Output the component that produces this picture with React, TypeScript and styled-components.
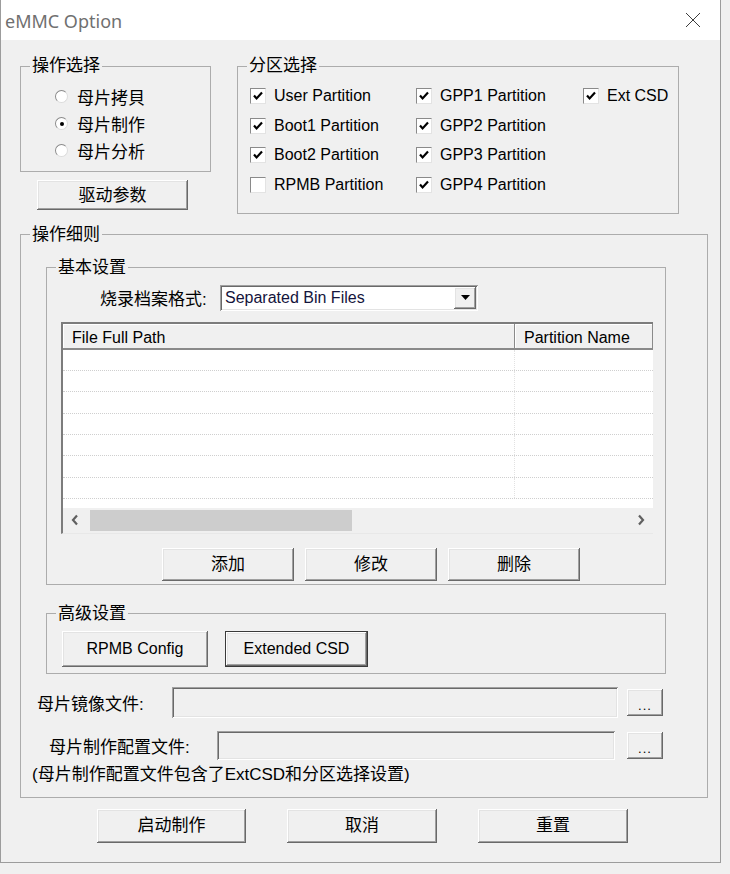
import styled, { createGlobalStyle, css } from 'styled-components'

const GlobalStyle = createGlobalStyle`
  html, body {
    margin: 0;
    padding: 0;
    background: #f0f0f0;
  }
  body {
    font-family: "Liberation Sans", "Noto Sans CJK SC", sans-serif;
    font-size: 16px;
    color: #000;
  }
  * { box-sizing: border-box; }
`

const raised = css`
  box-shadow: inset -1px -1px 0 #696969, inset 1px 1px 0 #ffffff,
    inset -2px -2px 0 #a0a0a0, inset 2px 2px 0 #e3e3e3;
`

const sunken = css`
  box-shadow: inset 1px 1px 0 #a0a0a0, inset -1px -1px 0 #ffffff,
    inset 2px 2px 0 #696969, inset -2px -2px 0 #e3e3e3;
`

const Window = styled.div`
  width: 721px;
  height: 863px;
  border: 1px solid #9c9c9c;
  border-top: none;
  background: #f0f0f0;
  display: flex;
  flex-direction: column;
`

const TitleBar = styled.div`
  height: 40px;
  flex: none;
  background: #fff;
  display: flex;
  align-items: center;
  justify-content: space-between;
  padding: 0 19px 0 4px;
`

const Title = styled.span`
  font-family: "Noto Sans", "Open Sans", sans-serif;
  font-size: 18px;
  color: #707070;
  line-height: 1;
  margin-top: 2px;
`

const Body = styled.div`
  flex: 1;
  padding: 17px 0 0 19px;
  display: flex;
  flex-direction: column;
`

const TopRow = styled.div`
  display: flex;
  align-items: flex-start;
  gap: 26px;
`

const LeftColumn = styled.div`
  width: 191px;
  display: flex;
  flex-direction: column;
  align-items: flex-start;
`

const Group = styled.fieldset<{ $w: number; $ml?: number; $mt?: number }>`
  margin: ${p => p.$mt ?? 0}px 0 0 ${p => p.$ml ?? 0}px;
  padding: 0;
  width: ${p => p.$w}px;
  min-width: 0;
  border: 1px solid #acacac;
  flex: none;
`

const Legend = styled.legend`
  margin-left: 9px;
  padding: 0 2px;
  font-size: 17px;
  line-height: 18px;
  height: 18px;
`

const RadioList = styled.div`
  padding: 8px 0 7px 34px;
`

const RadioRow = styled.label`
  display: flex;
  align-items: center;
  height: 27px;
  font-size: 17px;
`

const RadioDot = styled.span<{ $on?: boolean }>`
  width: 13px;
  height: 13px;
  border-radius: 50%;
  background: #fff;
  border: 1px solid;
  border-color: #8a8a8a #dcdcdc #dcdcdc #8a8a8a;
  margin-right: 9px;
  display: flex;
  align-items: center;
  justify-content: center;
  &::after {
    content: '';
    width: 4px;
    height: 4px;
    border-radius: 50%;
    background: ${p => (p.$on ? '#000' : 'transparent')};
  }
`

const Button = styled.button<{ $w: number; $h: number; $size?: number; $primary?: boolean }>`
  width: ${p => p.$w}px;
  height: ${p => p.$h}px;
  flex: none;
  padding: 0;
  background: #f0f0f0;
  border: ${p => (p.$primary ? '1px solid #3a3a3a' : 'none')};
  ${raised}
  font-family: inherit;
  font-size: ${p => p.$size ?? 17}px;
  line-height: 1;
  color: #000;
`

const DriverButton = styled(Button)`
  margin: 8px 0 0 17px;
`

const CheckGrid = styled.div`
  display: grid;
  grid-template-columns: 166px 167px 1fr;
  grid-auto-rows: 29.7px;
  padding: 6px 0 13px 12px;
`

const CheckItem = styled.label`
  display: flex;
  align-items: center;
  white-space: nowrap;
`

const CheckBox = styled.span`
  width: 16px;
  height: 16px;
  background: #fff;
  border: 1px solid;
  border-color: #8a8a8a #e3e3e3 #e3e3e3 #8a8a8a;
  margin-right: 8px;
  display: flex;
  align-items: center;
  justify-content: center;
`

const DetailsBody = styled.div`
  display: flex;
  flex-direction: column;
  align-items: flex-start;
  padding-bottom: 12px;
`

const FormatRow = styled.div`
  display: flex;
  align-items: center;
  margin: 8px 0 0 53px;
`

const FieldLabel = styled.span<{ $w: number }>`
  width: ${p => p.$w}px;
  font-size: 17px;
  white-space: nowrap;
  flex: none;
`

const Combo = styled.div`
  width: 258px;
  height: 26px;
  flex: none;
  margin-left: 3px;
  background: #fff;
  ${sunken}
  display: flex;
  align-items: stretch;
  padding: 2px;
`

const ComboText = styled.span`
  flex: 1;
  display: flex;
  align-items: center;
  padding-left: 3px;
  color: #14143c;
`

const ComboArrow = styled.span`
  width: 22px;
  background: #f0f0f0;
  ${raised}
  display: flex;
  align-items: center;
  justify-content: center;
`

const ListView = styled.div`
  width: 592px;
  height: 212px;
  margin: 11px 0 0 14px;
  background: #fff;
  border-top: 2px solid #7c7c7c;
  border-left: 2px solid #7c7c7c;
  border-bottom: 1px solid #e8e8e8;
  display: flex;
  flex-direction: column;
`

const ListHeader = styled.div`
  height: 26px;
  flex: none;
  display: grid;
  grid-template-columns: 452px 1fr;
`

const HeaderCell = styled.div`
  background: #f0f0f0;
  box-shadow: inset -1px -2px 0 #8a8a8a, inset 1px 1px 0 #ffffff;
  display: flex;
  align-items: center;
  padding: 3px 0 0 9px;
  white-space: nowrap;
  overflow: hidden;
`

const ListRows = styled.div`
  flex: 1;
  overflow: hidden;
`

const ListRow = styled.div`
  height: 21.3px;
  display: grid;
  grid-template-columns: 452px 1fr;
  border-bottom: 1px dotted #cfcfcf;
`

const ListCell = styled.div`
  border-right: 1px dotted #e2e2e2;
`

const HScroll = styled.div`
  height: 25px;
  flex: none;
  background: #f0f0f0;
  display: flex;
  align-items: center;
`

const ScrollArrow = styled.span`
  width: 24px;
  height: 100%;
  display: flex;
  align-items: center;
  justify-content: center;
  flex: none;
`

const ScrollTrack = styled.div`
  flex: 1;
  height: 100%;
  display: flex;
  align-items: center;
  padding-left: 3px;
`

const ScrollThumb = styled.div`
  width: 262px;
  height: 21px;
  background: #cdcdcd;
`

const ButtonRow = styled.div<{ $gap: number; $ml: number; $mt: number; $mb: number }>`
  display: flex;
  gap: ${p => p.$gap}px;
  margin: ${p => p.$mt}px 0 ${p => p.$mb}px ${p => p.$ml}px;
`

const FileRow = styled.div<{ $ml: number }>`
  display: flex;
  align-items: center;
  margin: 13px 0 0 ${p => p.$ml}px;
`

const FileInput = styled.div<{ $w: number; $h: number }>`
  width: ${p => p.$w}px;
  height: ${p => p.$h}px;
  background: #f0f0f0;
  ${sunken}
`

const BrowseButton = styled(Button)<{ $gap: number }>`
  margin-left: ${p => p.$gap}px;
  font-size: 13px;
  padding-top: 6px;
  letter-spacing: 1px;
`

const Note = styled.div`
  margin: 5px 0 0 11px;
  height: 20px;
  line-height: 20px;
  font-size: 17px;
  white-space: nowrap;
`

const Footer = styled.div`
  display: flex;
  gap: 41px;
  margin: 11px 0 0 77px;
`

const CloseIcon = () => (
  <svg width="16" height="16" viewBox="0 0 16 16">
    <path d="M1 1L15 15M15 1L1 15" stroke="#3c3c3c" strokeWidth="1" fill="none" />
  </svg>
)

const Check = () => (
  <svg width="12" height="12" viewBox="0 0 12 12">
    <polyline points="2,5.5 4.6,8.4 10,2.6" stroke="#000" strokeWidth="2.2" fill="none" />
  </svg>
)

const DownTriangle = () => (
  <svg width="9" height="5" viewBox="0 0 9 5">
    <polygon points="0,0 9,0 4.5,5" fill="#000" />
  </svg>
)

const Chevron = ({ dir }: { dir: 'left' | 'right' }) => (
  <svg width="8" height="12" viewBox="0 0 8 12">
    <polyline
      points={dir === 'left' ? '6,1.5 2,6 6,10.5' : '2,1.5 6,6 2,10.5'}
      stroke="#606060"
      strokeWidth="2.2"
      fill="none"
    />
  </svg>
)

const modes = ['母片拷貝', '母片制作', '母片分析']

const partitions: Array<{ label: string; on: boolean } | null> = [
  { label: 'User Partition', on: true },
  { label: 'GPP1 Partition', on: true },
  { label: 'Ext CSD', on: true },
  { label: 'Boot1 Partition', on: true },
  { label: 'GPP2 Partition', on: true },
  null,
  { label: 'Boot2 Partition', on: true },
  { label: 'GPP3 Partition', on: true },
  null,
  { label: 'RPMB Partition', on: false },
  { label: 'GPP4 Partition', on: true },
  null,
]

export default function App() {
  return (
    <>
      <GlobalStyle />
      <Window>
        <TitleBar>
          <Title>eMMC Option</Title>
          <CloseIcon />
        </TitleBar>

        <Body>
          <TopRow>
            <LeftColumn>
              <Group $w={191}>
                <Legend>操作选择</Legend>
                <RadioList>
                  {modes.map((m, i) => (
                    <RadioRow key={m}>
                      <RadioDot $on={i === 1} />
                      {m}
                    </RadioRow>
                  ))}
                </RadioList>
              </Group>
              <DriverButton $w={151} $h={30}>驱动参数</DriverButton>
            </LeftColumn>

            <Group $w={442}>
              <Legend>分区选择</Legend>
              <CheckGrid>
                {partitions.map((p, i) =>
                  p ? (
                    <CheckItem key={i}>
                      <CheckBox>{p.on && <Check />}</CheckBox>
                      {p.label}
                    </CheckItem>
                  ) : (
                    <span key={i} />
                  )
                )}
              </CheckGrid>
            </Group>
          </TopRow>

          <Group $w={688} $mt={12}>
            <Legend>操作细则</Legend>
            <DetailsBody>
              <Group $w={620} $ml={25} $mt={15}>
                <Legend>基本设置</Legend>
                <FormatRow>
                  <FieldLabel $w={117}>烧录档案格式:</FieldLabel>
                  <Combo>
                    <ComboText>Separated Bin Files</ComboText>
                    <ComboArrow>
                      <DownTriangle />
                    </ComboArrow>
                  </Combo>
                </FormatRow>

                <ListView>
                  <ListHeader>
                    <HeaderCell>File Full Path</HeaderCell>
                    <HeaderCell>Partition Name</HeaderCell>
                  </ListHeader>
                  <ListRows>
                    {Array.from({ length: 7 }).map((_, i) => (
                      <ListRow key={i}>
                        <ListCell />
                        <div />
                      </ListRow>
                    ))}
                  </ListRows>
                  <HScroll>
                    <ScrollArrow>
                      <Chevron dir="left" />
                    </ScrollArrow>
                    <ScrollTrack>
                      <ScrollThumb />
                    </ScrollTrack>
                    <ScrollArrow>
                      <Chevron dir="right" />
                    </ScrollArrow>
                  </HScroll>
                </ListView>

                <ButtonRow $gap={11} $ml={115} $mt={14} $mb={3}>
                  <Button $w={132} $h={33}>添加</Button>
                  <Button $w={132} $h={33}>修改</Button>
                  <Button $w={132} $h={33}>删除</Button>
                </ButtonRow>
              </Group>

              <Group $w={620} $ml={25} $mt={20}>
                <Legend>高级设置</Legend>
                <ButtonRow $gap={17} $ml={15} $mt={8} $mb={6}>
                  <Button $w={146} $h={36} $size={16}>RPMB Config</Button>
                  <Button $w={143} $h={36} $size={16} $primary>Extended CSD</Button>
                </ButtonRow>
              </Group>

              <FileRow $ml={16}>
                <FieldLabel $w={135}>母片镜像文件:</FieldLabel>
                <FileInput $w={446} $h={31} />
                <BrowseButton $w={36} $h={27} $gap={9}>...</BrowseButton>
              </FileRow>

              <FileRow $ml={28}>
                <FieldLabel $w={168}>母片制作配置文件:</FieldLabel>
                <FileInput $w={398} $h={29} />
                <BrowseButton $w={36} $h={27} $gap={12}>...</BrowseButton>
              </FileRow>

              <Note>(母片制作配置文件包含了ExtCSD和分区选择设置)</Note>
            </DetailsBody>
          </Group>

          <Footer>
            <Button $w={149} $h={34}>启动制作</Button>
            <Button $w={150} $h={34}>取消</Button>
            <Button $w={150} $h={34}>重置</Button>
          </Footer>
        </Body>
      </Window>
    </>
  )
}
